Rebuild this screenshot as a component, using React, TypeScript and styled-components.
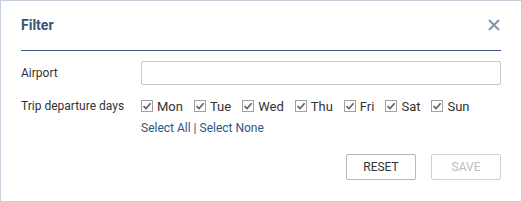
import * as React from 'react';
import styled, { createGlobalStyle } from 'styled-components';

const GlobalStyle = createGlobalStyle`
    body {
        margin: 0;
        background: #ffffff;
        font-family: Roboto, "Liberation Sans", Arial, sans-serif;
    }
`

// *** Styled Components ***
const Dialog = styled.div`
    width: 522px;
    height: 202px;
    box-sizing: border-box;
    border: 1px solid #c6d0dc;
    padding: 0 20px;
    background: #ffffff;
    color: #333333;
    font-size: 12px;
`
const Header = styled.div`
    display: flex;
    align-items: center;
    justify-content: space-between;
    height: 50px;
    box-sizing: border-box;
    padding: 13px 0 14px;
    border-bottom: 1px solid #3d5b82;
`
const Title = styled.h2`
    margin: 0;
    font-size: 14px;
    font-weight: 700;
    color: #3a5476;
    line-height: 22px;
`
const CloseButton = styled.button`
    display: flex;
    align-items: center;
    justify-content: center;
    width: 14px;
    height: 14px;
    margin-right: 0;
    padding: 0;
    border: none;
    background: none;
    cursor: pointer;
`
const Body = styled.div`
    display: grid;
    grid-template-columns: 120px 1fr;
    row-gap: 12px;
    padding-top: 10px;
`
const Label = styled.div<{ $height: number }>`
    display: flex;
    align-items: center;
    height: ${p => p.$height}px;
    color: #333333;
`
const Input = styled.input`
    width: 100%;
    height: 24px;
    box-sizing: border-box;
    border: 1px solid #c8c8c8;
    border-radius: 2px;
    padding: 0 6px;
    font: inherit;
    outline: none;
`
const Days = styled.div`
    display: flex;
    flex-direction: column;
    gap: 4px;
`
const DayList = styled.div`
    display: flex;
    align-items: center;
    height: 18px;
    gap: 11px;
`
const Day = styled.label`
    display: flex;
    align-items: center;
    gap: 4px;
    font-size: 13px;
    color: #333333;
    cursor: pointer;
`
const Box = styled.span`
    display: flex;
    align-items: center;
    justify-content: center;
    width: 12px;
    height: 12px;
    box-sizing: border-box;
    border: 1px solid #a0a0a0;
    background: #ffffff;
`
const Links = styled.div`
    height: 18px;
    line-height: 18px;
    color: #2e5582;
`
const Link = styled.a`
    color: inherit;
    text-decoration: none;
    cursor: pointer;
`
const Footer = styled.div`
    display: flex;
    justify-content: flex-end;
    gap: 15px;
    padding-top: 17px;
`
const Button = styled.button<{ $disabled?: boolean }>`
    width: 70px;
    height: 26px;
    box-sizing: border-box;
    border: 1px solid ${p => (p.$disabled ? '#d0d0d0' : '#b8b8b8')};
    border-radius: 2px;
    background: #ffffff;
    color: ${p => (p.$disabled ? '#bdbdbd' : '#333333')};
    font-family: Roboto, "Liberation Sans", Arial, sans-serif;
    font-size: 12px;
    text-transform: uppercase;
    cursor: ${p => (p.$disabled ? 'default' : 'pointer')};
`

const days = ['Mon', 'Tue', 'Wed', 'Thu', 'Fri', 'Sat', 'Sun'];

const Check = () => (
    <svg width="10" height="10" viewBox="0 0 10 10">
        <path d="M1.5 5.2 L4 7.6 L8.6 2.2" fill="none" stroke="#5f5f5f" strokeWidth="1.6" />
    </svg>
);

export default function App() {
    const [airport, setAirport] = React.useState('');

    return (
        <>
            <GlobalStyle />
            <Dialog>
                <Header>
                    <Title>Filter</Title>
                    <CloseButton aria-label="close">
                        <svg width="12" height="12" viewBox="0 0 12 12">
                            <path d="M1 1 L11 11 M11 1 L1 11" stroke="#8594a7" strokeWidth="2" />
                        </svg>
                    </CloseButton>
                </Header>
                <Body>
                    <Label $height={24}>Airport</Label>
                    <Input value={airport} onChange={e => setAirport(e.target.value)} />
                    <Label $height={18}>Trip departure days</Label>
                    <Days>
                        <DayList>
                            {days.map(day => (
                                <Day key={day}>
                                    <Box><Check /></Box>
                                    {day}
                                </Day>
                            ))}
                        </DayList>
                        <Links>
                            <Link>Select All</Link> | <Link>Select None</Link>
                        </Links>
                    </Days>
                </Body>
                <Footer>
                    <Button>Reset</Button>
                    <Button $disabled>Save</Button>
                </Footer>
            </Dialog>
        </>
    );
}
